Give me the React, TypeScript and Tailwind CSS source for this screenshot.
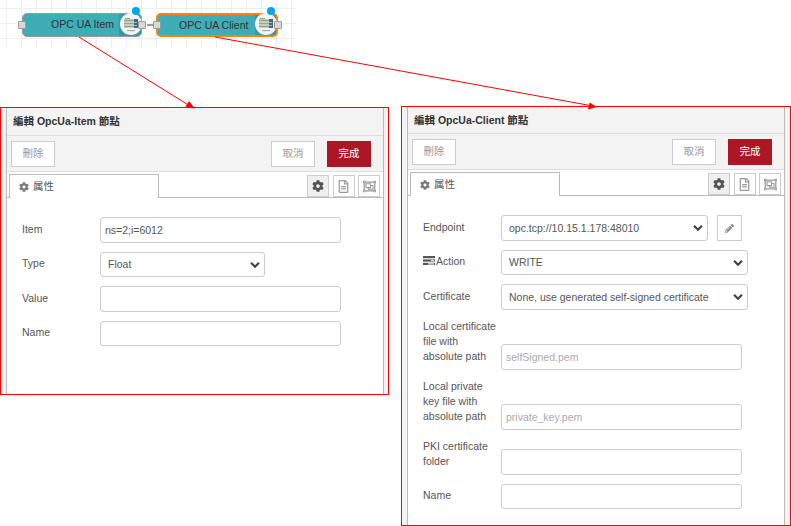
import React from "react";
import { FaCog, FaRegFileAlt, FaRegObjectGroup, FaPencilAlt } from "react-icons/fa";

function OpcIcon({ cx }: { cx: number }) {
  return (
    <svg className="absolute top-[13px]" style={{ left: cx - 11 }} width="22" height="22" viewBox="0 0 22 22">
      <circle cx="11" cy="11" r="11" fill="#f4f6f3" />
      <rect x="4" y="6" width="11" height="9" fill="#c3cfba" />
      <rect x="5" y="5" width="5" height="1" fill="#8ea58a" />
      <rect x="4" y="7" width="11" height="1" fill="#8ea58a" />
      <rect x="4" y="10" width="11" height="1" fill="#93a990" />
      <rect x="4" y="13" width="11" height="1" fill="#8ea58a" />
      <rect x="14" y="6" width="4" height="9" fill="#4a6582" />
      <rect x="14" y="9" width="3" height="1" fill="#a9bac9" />
      <rect x="14" y="12" width="3" height="1" fill="#a9bac9" />
      <rect x="7" y="17" width="8" height="1.2" fill="#a5a9a5" />
    </svg>
  );
}

function Port({ x }: { x: number }) {
  return (
    <div
      className="absolute top-[21px] h-[8px] w-[8px] rounded-[1px] border border-[#999] bg-[#d9d9d9]"
      style={{ left: x }}
    />
  );
}

function Canvas() {
  return (
    <div className="relative h-[48px] w-[296px] bg-[linear-gradient(#eeeeee_1px,transparent_1px),linear-gradient(90deg,#eeeeee_1px,transparent_1px)] bg-[size:15px_15px] bg-[position:6px_8px]">
      <div className="absolute left-[147px] top-[24px] h-[2px] w-[7px] bg-[#999]" />
      <div className="absolute left-[22px] top-[13px] flex h-[24px] w-[120px] overflow-hidden rounded-[5px] border border-[#999] bg-[#3fadb5]">
        <div className="flex-1 pl-[28px] text-[10.5px] leading-[21px] text-[#333]">OPC UA Item</div>
        <div className="w-[22px] bg-[#37999f]" />
      </div>
      <OpcIcon cx={131} />
      <div className="absolute left-[156px] top-[13px] flex h-[24px] w-[122px] overflow-hidden rounded-[5px] border-2 border-[#ff7f0e] bg-[#3fadb5]">
        <div className="flex-1 pl-[21px] text-[10.5px] leading-[20px] text-[#333]">OPC UA Client</div>
        <div className="w-[21px] bg-[#37999f]" />
      </div>
      <OpcIcon cx={266} />
      <Port x={18} />
      <Port x={138} />
      <Port x={153} />
      <Port x={274} />
      <div className="absolute left-[132px] top-[7px] h-[8px] w-[8px] rounded-full bg-[#00a8f0]" />
      <div className="absolute left-[267px] top-[7px] h-[8px] w-[8px] rounded-full bg-[#00a8f0]" />
    </div>
  );
}

function Arrows() {
  return (
    <svg className="absolute left-0 top-0" width="791" height="110" viewBox="0 0 791 110">
      <line x1="79" y1="37" x2="190" y2="106" stroke="#f00" strokeWidth="1" />
      <polygon points="195,108.5 185,107.5 189,101" fill="#f00" />
      <line x1="215" y1="37" x2="590" y2="105.5" stroke="#f00" strokeWidth="1" />
      <polygon points="597,107 588,109.5 589.5,102.5" fill="#f00" />
    </svg>
  );
}

function IconButton({ active, children }: { active?: boolean; children: React.ReactNode }) {
  return (
    <div
      className={
        active
          ? "flex h-[22px] w-[22px] items-center justify-center border border-[#ccc] bg-[#efefef] text-[12px] text-[#555]"
          : "flex h-[22px] w-[22px] items-center justify-center border border-[#ccc] bg-white text-[13px] text-[#999]"
      }
    >
      {children}
    </div>
  );
}

function BarsIcon() {
  return (
    <svg width="12" height="9" viewBox="0 0 12 9" className="mb-[2px]">
      <rect x="0" y="0" width="12" height="2.2" fill="#555" />
      <rect x="0" y="3.4" width="12" height="2.2" fill="#555" />
      <rect x="8" y="3.8" width="3" height="1.4" fill="#ddd" />
      <rect x="0" y="6.8" width="12" height="2.2" fill="#555" />
      <rect x="5" y="7.2" width="6" height="1.4" fill="#ddd" />
    </svg>
  );
}

function Chevron() {
  return (
    <svg className="pointer-events-none absolute right-[5px] top-1/2 -translate-y-1/2" width="10" height="7" viewBox="0 0 10 7">
      <polyline points="1,1.2 5,5.2 9,1.2" fill="none" stroke="#444" strokeWidth="2.2" />
    </svg>
  );
}

function SelectBox({ w, h, value }: { w: string; h: string; value: string }) {
  return (
    <div className={`relative ${w} ${h}`}>
      <select
        defaultValue={value}
        className="h-full w-full appearance-none rounded-[3px] border border-[#ccc] bg-white pl-[7px] pr-[16px] text-[10.5px] text-[#555] outline-none"
      >
        <option>{value}</option>
      </select>
      <Chevron />
    </div>
  );
}

function TextBox({ h, value, placeholder }: { h: string; value?: string; placeholder?: string }) {
  return (
    <input
      defaultValue={value}
      placeholder={placeholder}
      className={`${h} w-[241px] rounded-[3px] border border-[#ccc] bg-white px-[4px] text-[10.5px] text-[#555] outline-none placeholder:text-[#aaa]`}
    />
  );
}

function Row({ label, children }: { label: React.ReactNode; children: React.ReactNode }) {
  return (
    <div className="flex items-end">
      <div className="mb-[6px] w-[78px] pr-[2px] text-[#555]">{label}</div>
      {children}
    </div>
  );
}

function Panel({
  title,
  outer,
  header,
  children,
}: {
  title: string;
  outer: string;
  header: string;
  children: React.ReactNode;
}) {
  return (
    <div className={`${outer} flex flex-col border border-[#f00] bg-[#f3f3f3] pl-[5px]`}>
      <div className="flex flex-1 flex-col border-x border-[#bbb] bg-white">
        <div className={`${header} border-b border-[#ddd] bg-[#f3f3f3] pl-[6px] font-semibold leading-[26px] text-[#333]`}>
          {title}
        </div>
        <div className="flex h-[36px] items-center justify-between border-b border-[#ddd] bg-[#f3f3f3] pl-[4px] pr-[12px]">
          <div className="flex h-[26px] w-[44px] items-center justify-center border border-[#ccc] bg-white text-[#999]">刪除</div>
          <div className="flex gap-[12px]">
            <div className="flex h-[26px] w-[44px] items-center justify-center border border-[#ccc] bg-white text-[#999]">取消</div>
            <div className="flex h-[26px] w-[44px] items-center justify-center bg-[#ad1625] text-white">完成</div>
          </div>
        </div>
        <div className="flex h-[26px] items-start justify-between border-b border-[#bbb] pl-[2px] pr-[3px]">
          <div className="mt-[2px] flex h-[24px] w-[150px] items-center gap-[4px] border border-b-0 border-[#bbb] bg-white pl-[9px] text-[#555]">
            <FaCog className="text-[10px] text-[#777]" />
            <span>属性</span>
          </div>
          <div className="mt-[3px] flex gap-[3.5px]">
            <IconButton active><FaCog /></IconButton>
            <IconButton><FaRegFileAlt /></IconButton>
            <IconButton><FaRegObjectGroup /></IconButton>
          </div>
        </div>
        {children}
      </div>
    </div>
  );
}

export default function App() {
  return (
    <div className="relative h-[526px] w-[791px] overflow-hidden bg-white text-[10.5px] leading-[15px] [font-family:'Liberation_Sans','Noto_Sans_CJK_TC',sans-serif]">
      <Canvas />
      <div className="mt-[58px] flex items-start">
        <div className="mt-px">
          <Panel title="編輯 OpcUa-Item 節點" outer="h-[288px] w-[389px] pr-[4px]" header="h-[28px]">
            <div className="flex flex-col gap-[9px] px-[15px] pt-[19px]">
              <Row label="Item"><TextBox h="h-[26px]" value="ns=2;i=6012" /></Row>
              <Row label="Type"><SelectBox w="w-[165px]" h="h-[25px]" value="Float" /></Row>
              <Row label="Value"><TextBox h="h-[26px]" /></Row>
              <Row label="Name"><TextBox h="h-[25px]" /></Row>
            </div>
          </Panel>
        </div>
        <div className="ml-[12px]">
          <Panel title="編輯 OpcUa-Client 節點" outer="h-[420px] w-[390px] pr-[5px]" header="h-[27px]">
            <div className="flex flex-col gap-[9px] px-[15px] pt-[19px]">
              <Row label="Endpoint">
                <div className="flex gap-[9px]">
                  <SelectBox w="w-[207px]" h="h-[26px]" value="opc.tcp://10.15.1.178:48010" />
                  <div className="flex h-[26px] w-[25px] items-center justify-center border border-[#ccc] bg-white text-[9px] text-[#888]">
                    <FaPencilAlt />
                  </div>
                </div>
              </Row>
              <Row label={<span className="flex items-center gap-[1px]"><BarsIcon />Action</span>}>
                <SelectBox w="w-[247px]" h="h-[25px]" value="WRITE" />
              </Row>
              <Row label="Certificate">
                <SelectBox w="w-[247px]" h="h-[26px]" value="None, use generated self-signed certificate" />
              </Row>
              <Row label="Local certificate file with absolute path">
                <TextBox h="h-[26px]" placeholder="selfSigned.pem" />
              </Row>
              <Row label="Local private key file with absolute path">
                <TextBox h="h-[26px]" placeholder="private_key.pem" />
              </Row>
              <Row label="PKI certificate folder">
                <TextBox h="h-[26px]" />
              </Row>
              <Row label="Name">
                <TextBox h="h-[25px]" />
              </Row>
            </div>
          </Panel>
        </div>
      </div>
      <Arrows />
    </div>
  );
}
